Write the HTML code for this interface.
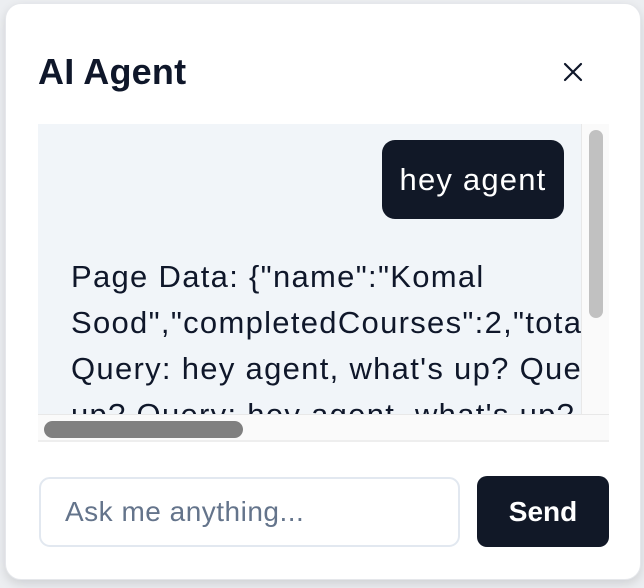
<!DOCTYPE html>
<html><head><meta charset="utf-8"><style>
html,body{margin:0;padding:0;width:644px;height:588px;overflow:hidden;background:#eceef1;font-family:"Liberation Sans",sans-serif;}
.card{position:absolute;left:5px;top:3px;width:636px;height:577px;background:#fff;border-radius:16px;border:1px solid #e5e7eb;box-sizing:border-box;box-shadow:0 4px 10px rgba(0,0,0,.12);}
.title{position:absolute;left:38px;top:51px;font-size:36px;font-weight:bold;color:#0f172a;letter-spacing:0.2px;}
.close{position:absolute;left:563px;top:62px;width:20px;height:20px;}
.msgs{position:absolute;left:38px;top:124px;width:543px;height:290px;background:#f1f5f9;overflow:hidden;}
.vtrack{position:absolute;left:581px;top:124px;width:28px;height:290px;background:#fafafa;border-left:1px solid #e8e8e8;box-sizing:border-box;}
.vthumb{position:absolute;left:589px;top:130px;width:14px;height:188px;background:#c1c1c1;border-radius:7px;}
.htrack{position:absolute;left:38px;top:414px;width:571px;height:28px;background:#fafafa;border-top:1px solid #e8e8e8;border-bottom:2px solid #eee;box-sizing:border-box;}
.hthumb{position:absolute;left:44px;top:421px;width:199px;height:17px;background:#808080;border-radius:9px;}
.bubble{position:absolute;left:344px;top:16px;width:182px;height:79px;background:#111827;border-radius:13px;color:#fff;font-size:31px;letter-spacing:1.2px;line-height:79px;text-align:center;}
.txt{position:absolute;left:33px;top:130px;font-size:31px;letter-spacing:1.3px;line-height:46px;color:#0f172a;white-space:nowrap;}
.input{position:absolute;left:39px;top:477px;width:421px;height:70px;border:2px solid #e2e8f0;border-radius:11px;box-sizing:border-box;font-size:28px;letter-spacing:0.5px;color:#64748b;line-height:66px;padding-left:24px;}
.send{position:absolute;left:477px;top:476px;width:132px;height:71px;background:#111827;border-radius:10px;color:#fff;font-size:28px;font-weight:bold;line-height:71px;text-align:center;}
</style></head><body>
<div class="card"></div>
<div class="title">AI Agent</div>
<svg class="close" viewBox="0 0 20 20"><path d="M2 2L18 18M18 2L2 18" stroke="#0f172a" stroke-width="2.2" stroke-linecap="round"/></svg>
<div class="msgs">
<div class="bubble">hey agent</div>
<div class="txt">Page Data: {"name":"Komal<br>Sood","completedCourses":2,"totalCourses":5}<br>Query: hey agent, what's up? Query: hey agent, what's<br>up? Query: hey agent, what's up?</div>
</div>
<div class="vtrack"></div><div class="vthumb"></div>
<div class="htrack"></div><div class="hthumb"></div>
<div class="input">Ask me anything...</div>
<div class="send">Send</div>
</body></html>
